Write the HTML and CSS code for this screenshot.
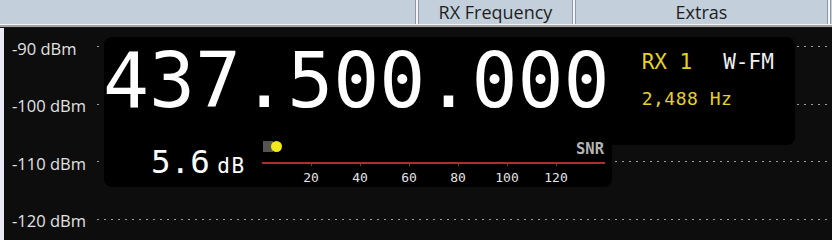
FILE: index.html
```html
<!DOCTYPE html>
<html lang="en">
<head>
    <meta charset="UTF-8">
    <title>RX Frequency</title>
    <link rel="stylesheet" href="styles.css">
</head>
<body>
    <div class="window">
        <div class="tabbar">
            <div class="tab-spacer"></div>
            <div class="sep"></div>
            <div class="tab tab-rx">RX Frequency</div>
            <div class="sep"></div>
            <div class="tab tab-extras">Extras</div>
            <div class="sep"></div>
        </div>
        <div class="tab-rule"></div>

        <div class="body">
            <div class="edge"></div>
            <div class="chart">
                <div class="scale">
                    <div class="level"><span class="level-label">-90 dBm</span><span class="level-line"></span></div>
                    <div class="level"><span class="level-label">-100 dBm</span><span class="level-line"></span></div>
                    <div class="level"><span class="level-label">-110 dBm</span><span class="level-line"></span></div>
                    <div class="level"><span class="level-label">-120 dBm</span><span class="level-line"></span></div>
                </div>

                <!-- frequency readout floats over the level chart -->
                <div class="overlay">
                    <div class="freq-row">
                        <div class="freq">437.500.000</div>
                        <div class="info">
                            <div class="info-top">
                                <span class="rx-name">RX 1</span>
                                <span class="mode">W-FM</span>
                            </div>
                            <div class="offset">2,488 Hz</div>
                        </div>
                    </div>
                    <div class="snr-row">
                        <div class="snr-readout">
                            <span class="snr-value">5.6</span>
                            <span class="snr-unit">dB</span>
                        </div>
                        <div class="meter">
                            <div class="meter-top">
                                <span class="meter-block"></span>
                                <span class="meter-dot"></span>
                                <span class="meter-name">SNR</span>
                            </div>
                            <div class="meter-line"></div>
                            <div class="meter-ticks">
                                <span>20</span>
                                <span>40</span>
                                <span>60</span>
                                <span>80</span>
                                <span>100</span>
                                <span>120</span>
                            </div>
                        </div>
                    </div>
                </div>
            </div>
        </div>
    </div>
</body>
</html>
```

FILE: styles.css
```css
:root {
    --bar-color: #c3d0dc;
    --sep-dark: #8e99a5;
    --chart-bg: #0d0d0d;
    --panel-bg: #000000;
    --yellow: #e6d222;
    --label-color: #e2e2e2;
    --meter-red: #a8302e;
}

* {
    box-sizing: border-box;
    margin: 0;
    padding: 0;
}

body {
    width: 832px;
    height: 240px;
    overflow: hidden;
    background-color: var(--chart-bg);
}

.window {
    display: flex;
    flex-direction: column;
    height: 240px;
}

/* tab strip */

.tabbar {
    display: flex;
    height: 24px;
    background-color: var(--bar-color);
    font-family: 'Open Sans', 'Noto Sans', sans-serif;
    font-size: 18px;
    color: #1e1e1e;
}

.tab-spacer {
    width: 415px;
}

.sep {
    width: 4px;
    border-left: 1px solid var(--sep-dark);
    border-right: 1px solid var(--sep-dark);
    background-color: #f3f5f7;
}

.tab {
    line-height: 24px;
    text-align: center;
}

.tab-rx {
    width: 153px;
}

.tab-extras {
    width: 251px;
}

.tab-rule {
    height: 4px;
    border-top: 1px solid #f4f4f4;
    border-bottom: 1px solid #1a1a1a;
    background-color: #a3a3a3;
}

/* chart area */

.body {
    flex: 1;
    display: flex;
}

.edge {
    width: 4px;
    background-color: #eae9f6;
}

.chart {
    flex: 1;
    position: relative;
    background-color: var(--chart-bg);
}

.scale {
    display: flex;
    flex-direction: column;
    gap: 29.5px;
    padding-top: 6px;
}

.level {
    display: flex;
    align-items: center;
    height: 28px;
}

.level-label {
    width: 93px;
    padding-left: 8px;
    font-family: 'Open Sans', 'Noto Sans', sans-serif;
    font-size: 16.5px;
    color: var(--label-color);
}

.level-line {
    flex: 1;
    height: 1px;
    margin-top: -3px;
    background-image: repeating-linear-gradient(to right, #9c9c9c 0 2px, transparent 2px 7px);
}

/* readout panel */

.overlay {
    position: absolute;
    top: 9px;
    left: 100px;
    font-family: 'DejaVu Sans Mono', 'Liberation Mono', monospace;
}

.freq-row {
    display: flex;
    width: 691px;
    height: 108px;
    background-color: var(--panel-bg);
    border-radius: 8px 8px 8px 0;
}

.freq {
    padding-top: 6px;
    margin-left: -1px;
    font-size: 76.5px;
    line-height: 1;
    color: #ffffff;
}

.info {
    margin-left: 32px;
    padding-top: 15px;
}

.info-top {
    display: flex;
    gap: 31px;
    font-size: 21px;
    line-height: 1;
}

.rx-name {
    color: var(--yellow);
}

.mode {
    color: #f0f0f0;
}

.offset {
    margin-top: 17px;
    font-size: 18px;
    letter-spacing: 0.5px;
    line-height: 1;
    color: var(--yellow);
}

.snr-row {
    display: flex;
    width: 508px;
    height: 50px;
    margin-top: -8px;
    background-color: var(--panel-bg);
    border-radius: 0 0 8px 8px;
}

.snr-readout {
    width: 158px;
    padding-left: 47px;
    padding-top: 9px;
    color: #ffffff;
    white-space: nowrap;
}

.snr-value {
    font-size: 32.5px;
    line-height: 32px;
}

.snr-unit {
    margin-left: -2px;
    font-size: 21px;
    letter-spacing: 1.5px;
}

.meter {
    width: 343px;
    padding-top: 3px;
}

.meter-top {
    display: flex;
    align-items: flex-start;
    height: 22px;
}

.meter-block {
    width: 10px;
    height: 11px;
    margin-top: 1px;
    margin-left: 1px;
    background-color: #545454;
}

.meter-dot {
    width: 11px;
    height: 11px;
    margin-left: -2px;
    margin-top: 1px;
    border-radius: 50%;
    background-color: #f2e61c;
}

.meter-name {
    margin-left: auto;
    margin-right: 1px;
    font-size: 15.5px;
    font-weight: bold;
    line-height: 1;
    color: #b4b4b4;
    padding-top: 2px;
}

.meter-line {
    height: 2px;
    background-color: var(--meter-red);
}

.meter-ticks {
    display: flex;
    padding-left: 24.5px;
}

.meter-ticks span {
    position: relative;
    width: 49px;
    padding-top: 7px;
    font-size: 13px;
    line-height: 1;
    text-align: center;
    color: #e4e4e4;
}

.meter-ticks span::before {
    content: '';
    position: absolute;
    top: 0;
    left: 24px;
    width: 1px;
    height: 2px;
    background-color: #7a3a3a;
}
```
